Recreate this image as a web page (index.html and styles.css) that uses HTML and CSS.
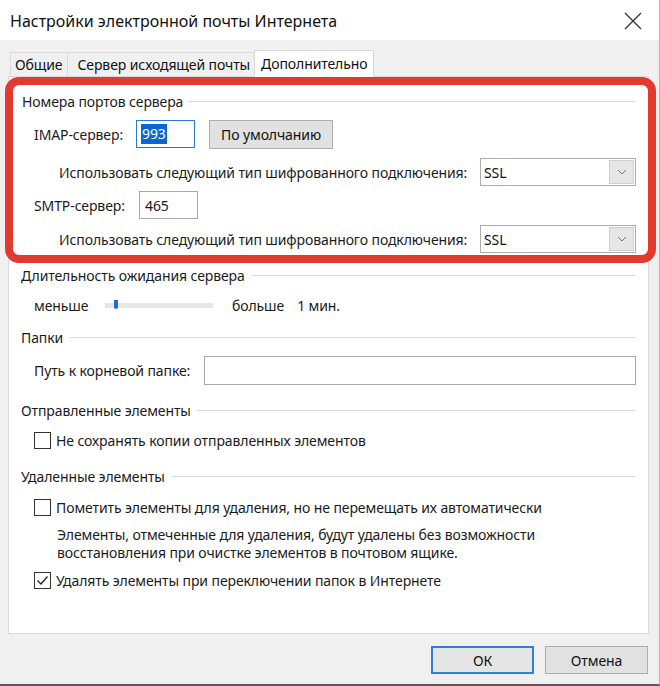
FILE: index.html
```html
<!DOCTYPE html>
<html lang="ru">
<head>
<meta charset="utf-8">
<title>Настройки электронной почты Интернета</title>
<link rel="stylesheet" href="styles.css">
</head>
<body>
<div class="window">
  <div class="titlebar">
    <span class="title">Настройки электронной почты Интернета</span>
    <svg class="close" width="18" height="18" viewBox="0 0 18 18"><path d="M1 1L17 17M17 1L1 17" stroke="#333" stroke-width="1.3" fill="none"/></svg>
  </div>
  <div class="tabs">
    <div class="tab">Общие</div>
    <div class="tab">Сервер исходящей почты</div>
    <div class="tab active">Дополнительно</div>
  </div>
  <div class="panel">
    <div class="highlight">
      <div class="group-title"><span>Номера портов сервера</span></div>
      <div class="row imap-row">
        <span class="label">IMAP-сервер:</span>
        <div class="input port imap"><span class="sel">993</span></div>
        <button class="btn default-btn">По умолчанию</button>
      </div>
      <div class="row enc-row first-enc">
        <span class="enc-label">Использовать следующий тип шифрованного подключения:</span>
        <div class="select"><span class="select-val">SSL</span><span class="arrow"><svg width="10" height="6" viewBox="0 0 10 6"><path d="M1 1L5 5L9 1" stroke="#777" stroke-width="1" fill="none"/></svg></span></div>
      </div>
      <div class="row smtp-row">
        <span class="label">SMTP-сервер:</span>
        <div class="input port smtp">465</div>
      </div>
      <div class="row enc-row second-enc">
        <span class="enc-label">Использовать следующий тип шифрованного подключения:</span>
        <div class="select"><span class="select-val">SSL</span><span class="arrow"><svg width="10" height="6" viewBox="0 0 10 6"><path d="M1 1L5 5L9 1" stroke="#777" stroke-width="1" fill="none"/></svg></span></div>
      </div>
    </div>

    <div class="section">
      <div class="group-title g-timeout"><span>Длительность ожидания сервера</span></div>
      <div class="row slider-row">
        <span class="label">меньше</span>
        <div class="track"><span class="thumb"></span></div>
        <span class="more">больше</span>
        <span class="min">1 мин.</span>
      </div>
      <div class="group-title g-folders"><span>Папки</span></div>
      <div class="row root-row">
        <span class="label">Путь к корневой папке:</span>
        <div class="input root"></div>
      </div>
      <div class="group-title g-sent"><span>Отправленные элементы</span></div>
      <div class="row check-row c-sent">
        <span class="checkbox"></span>
        <span class="check-text">Не сохранять копии отправленных элементов</span>
      </div>
      <div class="group-title g-deleted"><span>Удаленные элементы</span></div>
      <div class="row check-row c-mark">
        <span class="checkbox"></span>
        <span class="check-text">Пометить элементы для удаления, но не перемещать их автоматически</span>
      </div>
      <p class="desc">Элементы, отмеченные для удаления, будут удалены без возможности<br>восстановления при очистке элементов в почтовом ящике.</p>
      <div class="row check-row c-purge">
        <span class="checkbox checked"><svg width="15" height="15" viewBox="0 0 15 15"><path d="M2.5 7.5L6 11L12.5 3.5" stroke="#222" stroke-width="1.3" fill="none"/></svg></span>
        <span class="check-text">Удалять элементы при переключении папок в Интернете</span>
      </div>
    </div>
  </div>
  <div class="footer">
    <button class="btn ok">ОК</button>
    <button class="btn cancel">Отмена</button>
  </div>
</div>
</body>
</html>
```

FILE: styles.css
```css
* { box-sizing: border-box; }
html, body { margin: 0; padding: 0; }
body {
  width: 660px;
  height: 686px;
  overflow: hidden;
  background: #f0f0f0;
  font-family: "Noto Sans", "Open Sans", sans-serif;
  font-size: 14px;
  letter-spacing: -0.1px;
  color: #1b1b1b;
}
.window {
  height: 686px;
  border-bottom: 2px solid #5a5a5a;
  border-right: 1px solid #b5b5b5;
  display: flex;
  flex-direction: column;
}
.titlebar {
  height: 40px;
  background: #fff;
  display: flex;
  align-items: center;
  justify-content: space-between;
  padding: 0 17px 0 10px;
  flex: none;
}
.title { font-size: 16px; letter-spacing: 0; color: #111; margin-top: 2px; }
.close { margin-top: 2px; }

.tabs {
  display: flex;
  align-items: flex-end;
  padding-left: 10px;
  height: 36px;
  flex: none;
}
.tab {
  height: 24px;
  padding: 0 5px 0 4px;
  border: 1px solid #d9d9d9;
  border-bottom: none;
  margin-right: -1px;
  display: flex;
  align-items: center;
  background: #f0f0f0;
  color: #111;
}
.tab:nth-child(2) { padding: 0 4px 0 9px; }
.tab.active {
  background: #fff;
  padding: 0 6px 2px 6px;
  position: relative;
  z-index: 1;
  margin-bottom: -1px;
  height: 27px;
}

.panel {
  margin: 0 10px 0 8px;
  height: 558px;
  background: #fff;
  border: 1px solid #d9d9d9;
  flex: none;
}
.highlight {
  margin: 0 -8px 0 -4px;
  height: 186px;
  border: 8px solid #e23a2e;
  border-radius: 14px;
  padding: 6px 12px 0 9px;
}
.group-title {
  height: 20px;
  display: flex;
  align-items: center;
  gap: 6px;
}
.group-title::after {
  content: "";
  flex: 1;
  height: 1px;
  background: #dcdcdc;
}
.row { display: flex; align-items: center; }
.label { color: #1b1b1b; }
.imap-row { height: 30px; margin-top: 8px; padding-left: 12px; }
.imap-row .label { width: 102px; }
.input {
  height: 28px;
  border: 1px solid #a9a9a9;
  background: #fff;
  display: flex;
  align-items: center;
  padding-left: 5px;
}
.port { width: 59px; }
.imap { border-color: #2b79d6; padding-left: 4px; }
.sel { background: #0a67d0; color: #fff; padding: 0 1px; line-height: 20px; }
.default-btn { margin-left: 14px; width: 124px; height: 29px; }
.btn {
  font-family: inherit;
  font-size: 14px;
  letter-spacing: -0.1px;
  color: #111;
  background: #e1e1e1;
  border: 1px solid #adadad;
  padding: 0;
}
.enc-row { height: 28px; padding-left: 37px; justify-content: space-between; }
.first-enc { margin-top: 9px; }
.second-enc { margin-top: 6px; }
.select {
  width: 156px;
  height: 28px;
  border: 1px solid #acacac;
  display: flex;
  align-items: center;
  justify-content: space-between;
  padding: 2px 1px 2px 3px;
}
.select-val { color: #111; }
.arrow {
  width: 25px;
  height: 24px;
  background: #e6e6e6;
  border: 1px solid #cfcfcf;
  display: flex;
  align-items: center;
  justify-content: center;
}
.smtp-row { height: 28px; margin-top: 5px; padding-left: 12px; }
.smtp-row .label { width: 105px; }

.section { padding: 0 12px 0 12px; }
.g-timeout { margin-top: 2px; }
.slider-row { height: 20px; margin-top: 10px; padding-left: 13px; }
.slider-row .label { width: 71px; }
.track {
  width: 108px;
  height: 5px;
  background: #e7e7e7;
  position: relative;
}
.thumb {
  position: absolute;
  left: 9px;
  top: -3px;
  width: 4px;
  height: 9px;
  background: #1c6fcf;
  border-radius: 0 0 2px 2px;
}
.more { margin-left: 19px; }
.min { margin-left: 13px; }
.g-folders { margin-top: 12px; }
.root-row { height: 29px; margin-top: 9px; padding-left: 13px; }
.root-row .label { width: 170px; }
.input.root { flex: 1; height: 29px; }
.g-sent { margin-top: 15px; }
.check-row { height: 20px; padding-left: 13px; }
.c-sent { margin-top: 10px; }
.g-deleted { margin-top: 16px; }
.c-mark { margin-top: 11px; }
.checkbox {
  width: 17px;
  height: 17px;
  border: 1px solid #333;
  background: #fff;
  display: flex;
  align-items: center;
  justify-content: center;
  flex: none;
}
.check-text { margin-left: 5px; }
.desc {
  margin: 9px 0 0 36px;
  line-height: 18px;
}
.c-purge { margin-top: 8px; }

.footer {
  display: flex;
  justify-content: flex-end;
  gap: 11px;
  padding: 12px 11px 0 0;
}
.footer .btn { width: 103px; height: 28px; }
.ok { border: 2px solid #2f7fd4; background: #e5e5e5; }
```
